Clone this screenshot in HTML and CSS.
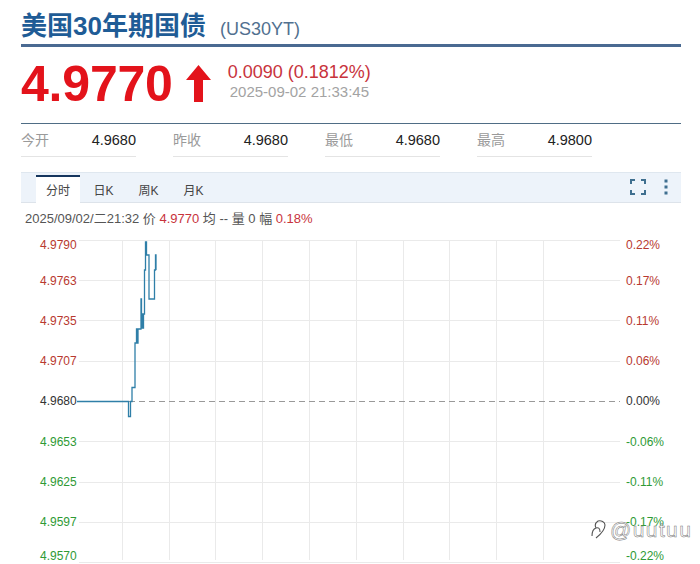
FILE: index.html
```html
<!DOCTYPE html>
<html lang="zh-CN">
<head>
  <meta charset="UTF-8" />
  <meta name="viewport" content="width=device-width, initial-scale=1.0" />
  <title>美国30年期国债</title>
  <link rel="stylesheet" href="styles.css">
</head>
<body>
  <div class="page">
    <header class="title">
      <h1>美国30年期国债</h1>
      <span class="code">(US30YT)</span>
    </header>

    <div class="quote">
      <span class="price">4.9770</span>
      <svg class="arrow" width="25" height="37" viewBox="0 0 25 37">
        <path d="M12.500 0 L25 15 L17 15 L17 37 L8 37 L8 15 L0 15 Z" fill="#e3131b" />
      </svg>
      <div class="change">
        <div class="delta">0.0090 (0.1812%)</div>
        <div class="stamp">2025-09-02 21:33:45</div>
      </div>
    </div>

    <div class="stats">
      <div class="stat"><span class="stat-label">今开</span><span class="stat-value">4.9680</span></div>
      <div class="stat"><span class="stat-label">昨收</span><span class="stat-value">4.9680</span></div>
      <div class="stat"><span class="stat-label">最低</span><span class="stat-value">4.9680</span></div>
      <div class="stat"><span class="stat-label">最高</span><span class="stat-value">4.9800</span></div>
    </div>

    <nav class="tabs">
      <a class="tab active">分时</a>
      <a class="tab">日K</a>
      <a class="tab">周K</a>
      <a class="tab">月K</a>
      <div class="tools">
        <svg width="16" height="16" viewBox="0 0 16 16" fill="none" stroke="#3f6f8f" stroke-width="2">
          <path d="M1 5 V1 H5 M11 1 H15 V5 M1 11 V15 H5 M11 15 H15 V11" />
        </svg>
        <svg width="4" height="16" viewBox="0 0 4 16" fill="#3f6f8f">
          <rect x="0.500" y="0.500" width="3" height="3" />
          <rect x="0.500" y="6.500" width="3" height="3" />
          <rect x="0.500" y="12.500" width="3" height="3" />
        </svg>
      </div>
    </nav>

    <div class="info">
      2025/09/02/二21:32 价 <span class="up">4.9770</span> 均 -- 量 0 幅 <span class="up">0.18%</span>
    </div>

    <svg class="chart" width="672" height="328" viewBox="21 236 672 328">
      <g class="grid">
        <path d="M79 240.500 H620 M79 280.500 H620 M79 320.500 H620 M79 361.500 H620 M79 441.500 H620 M79 482.500 H620 M79 522.500 H620 M79 562.500 H620" />
        <path d="M122.500 240 V560 M169.500 240 V560 M215.500 240 V560 M262.500 240 V560 M309.500 240 V560 M356.500 240 V560 M403.500 240 V560 M449.500 240 V560 M496.500 240 V560 M543.500 240 V560" />
      </g>
      <path class="base" d="M79 401.500 H620" />
      <path class="line" d="M77 401.500 H128.500 V416.500 H130.500 V401.500 H132 V387.500 H135 V343 H136.500 V329 H137.500 V343 H138 V329 H141 V299 H141.500 V328 H142.500 V314 H143 V328 H143.500 V314 H144.500 V299 V270 H145.500 V242 H146.500 V255 H149 V299 H154.500 V270 H155.500 V255 H156 V270" />

      <g class="axis">
        <text class="up" x="40" y="249">4.9790</text>
        <text class="up" x="40" y="285">4.9763</text>
        <text class="up" x="40" y="325">4.9735</text>
        <text class="up" x="40" y="365">4.9707</text>
        <text class="flat" x="40" y="405">4.9680</text>
        <text class="down" x="40" y="446">4.9653</text>
        <text class="down" x="40" y="486">4.9625</text>
        <text class="down" x="40" y="526">4.9597</text>
        <text class="down" x="40" y="560">4.9570</text>

        <text class="up" x="626" y="249">0.22%</text>
        <text class="up" x="626" y="285">0.17%</text>
        <text class="up" x="626" y="325">0.11%</text>
        <text class="up" x="626" y="365">0.06%</text>
        <text class="flat" x="626" y="405">0.00%</text>
        <text class="down" x="626" y="446">-0.06%</text>
        <text class="down" x="626" y="486">-0.11%</text>
        <text class="down" x="626" y="526">-0.17%</text>
        <text class="down" x="626" y="560">-0.22%</text>
      </g>
    </svg>
  </div>

  <div class="mark">
    <svg width="18" height="20" viewBox="0 0 18 20" fill="none" stroke="#555" stroke-width="1.100">
      <path d="M8 1 C11 0 15 2 15 5 C15 10 11 14 6 18 M8 1 C5 3 5 6 6 8 C3 9 2 12 2 16 M6 8 C9 7 10 9 10 12" />
    </svg>
    <span>@uutuu</span>
  </div>
</body>
</html>
```

FILE: styles.css
```css
body {
  margin: 0;
  background: #fff;
  color: #222;
  font-family: "Liberation Sans", "Noto Sans CJK SC", sans-serif;
  overflow: hidden;
}
.page {
  width: 660px;
  margin-left: 21px;
}
.title {
  display: flex;
  align-items: baseline;
  gap: 14px;
  height: 47px;
  box-sizing: border-box;
  padding-top: 9px;
  border-bottom: 3px solid #4a6a92;
}
.title h1 {
  margin: 0;
  font-size: 26px;
  line-height: 34px;
  font-weight: 700;
  color: #1f5c96;
}
.code {
  font-size: 18px;
  color: #51708f;
}
.quote {
  display: flex;
  align-items: center;
  height: 76px;
  border-bottom: 1px solid #4f6d85;
}
.price {
  margin-bottom: 2px;
  font-size: 50px;
  font-weight: 700;
  line-height: 76px;
  color: #e3131b;
  letter-spacing: -0.2px;
}
.arrow {
  margin-left: 13px;
  margin-bottom: 4px;
}
.change {
  margin-left: 17px;
  margin-bottom: 7px;
}
.delta {
  font-size: 18px;
  line-height: 20px;
  color: #c8333c;
}
.stamp {
  margin-left: 2px;
  font-size: 15px;
  line-height: 20px;
  color: #a3a3a3;
}
.stats {
  display: flex;
  gap: 37px;
  height: 48px;
}
.stat {
  display: flex;
  justify-content: space-between;
  align-items: center;
  width: 115px;
  height: 32px;
  border-bottom: 1px solid #e4e4e4;
}
.stat-label {
  margin-bottom: 2px;
  font-size: 14px;
  color: #9a9a9a;
}
.stat-value {
  margin-bottom: 1px;
  font-size: 14.500px;
  color: #222;
}
.tabs {
  display: flex;
  align-items: flex-end;
  height: 31px;
  box-sizing: border-box;
  padding-left: 15px;
  background: #edf3fa;
  border-top: 1px solid #dfe7ef;
  border-bottom: 1px solid #dde3ea;
}
.tab {
  width: 45px;
  height: 25px;
  line-height: 28px;
  text-align: center;
  font-size: 12px;
  color: #444;
}
.tab.active {
  width: 44px;
  height: 26px;
  margin-right: 1px;
  margin-bottom: -1px;
  line-height: 28px;
  border-top: 2px solid #16365e;
  background: #fff;
}
.tools {
  display: flex;
  align-items: center;
  gap: 18px;
  height: 27px;
  margin-left: auto;
  margin-right: 13px;
  align-self: flex-start;
}
.info {
  height: 33px;
  padding-left: 4px;
  font-size: 13px;
  line-height: 31px;
  color: #555;
}
.up {
  color: #c8333c;
}
.chart {
  display: block;
}
.grid path {
  fill: none;
  stroke: #eaeaea;
  stroke-width: 1;
}
.base {
  fill: none;
  stroke: #999;
  stroke-dasharray: 6 4;
}
.line {
  fill: none;
  stroke: #2f7fa8;
  stroke-width: 1.300;
}
.axis text {
  font-size: 12px;
}
.axis .up {
  fill: #b8392f;
}
.axis .flat {
  fill: #333;
}
.axis .down {
  fill: #2f9a35;
}
.mark {
  position: absolute;
  left: 590px;
  top: 520px;
  display: flex;
  align-items: center;
  gap: 2px;
  height: 20px;
}
.mark span {
  font-size: 21px;
  letter-spacing: 1.400px;
  color: rgba(255, 255, 255, 0.6);
  -webkit-text-stroke: 0.500px #777;
}
```
